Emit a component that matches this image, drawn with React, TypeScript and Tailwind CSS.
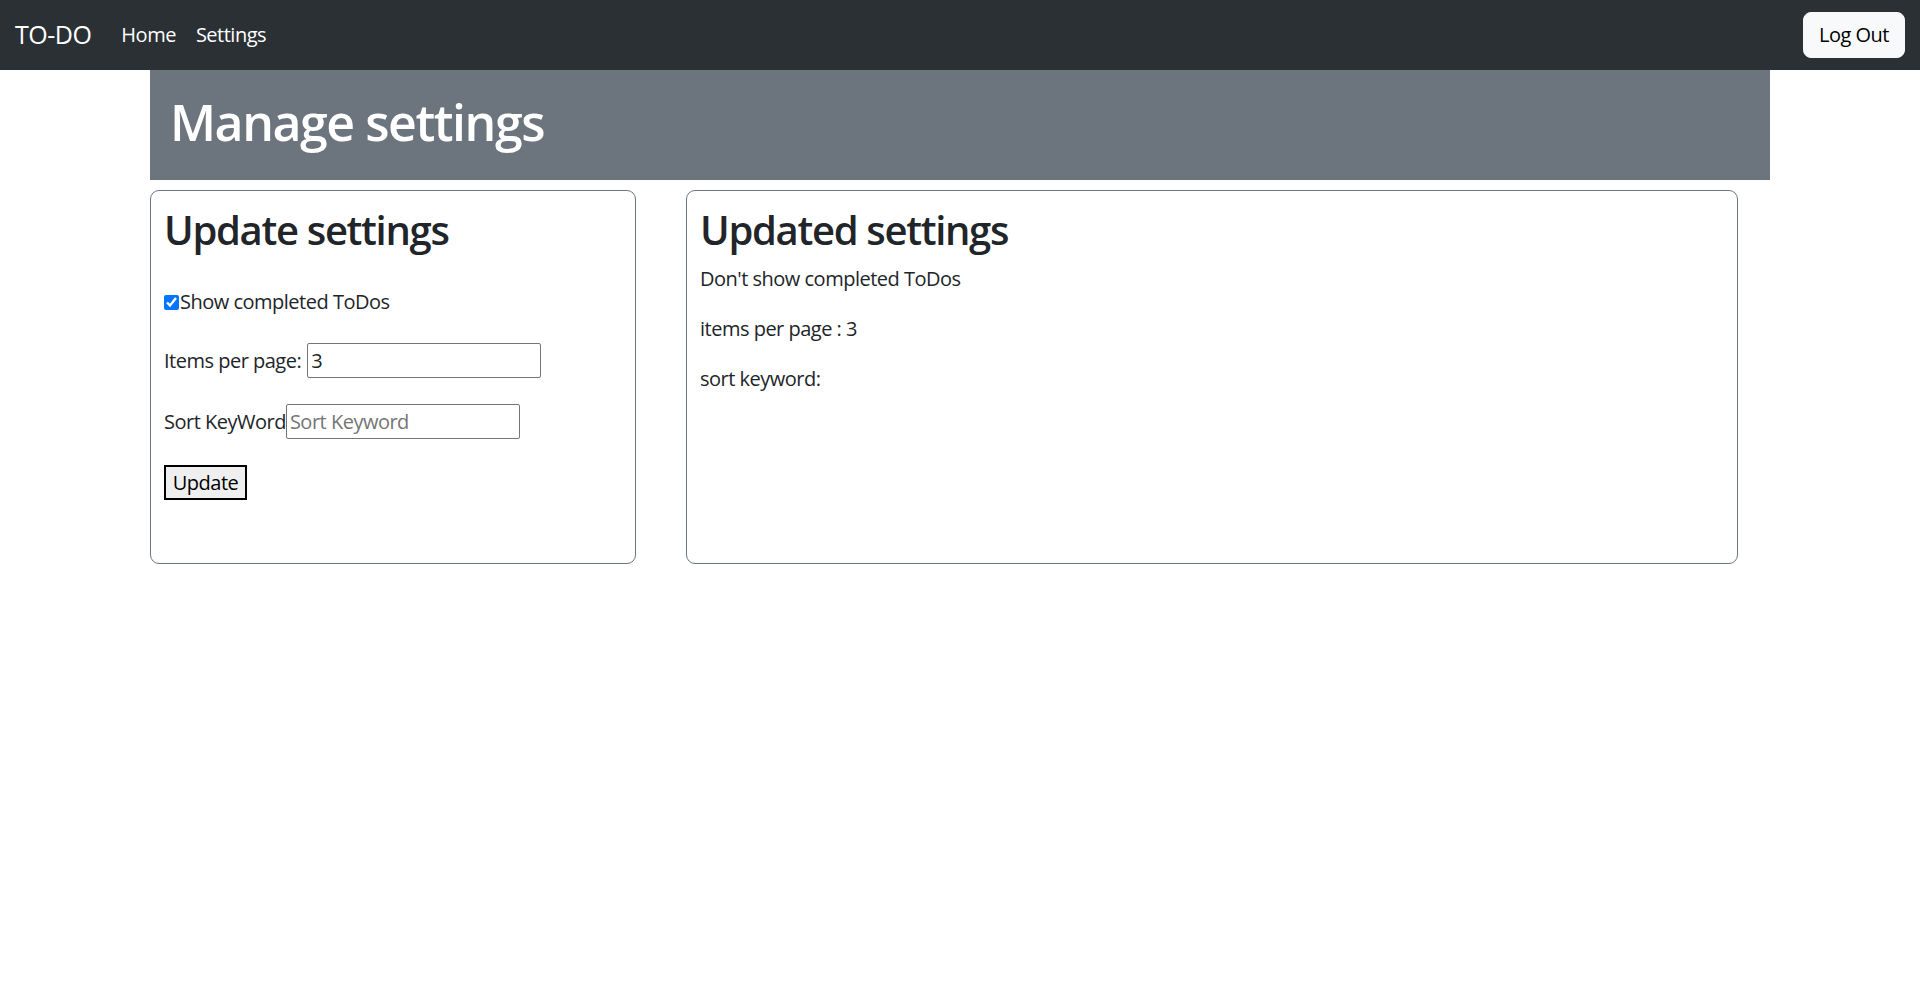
import React from "react";

function NavBar() {
  return (
    <nav className="flex h-[70px] items-center justify-between bg-[#2b3035] px-[15px]">
      <div className="flex items-center">
        <span className="mr-[20px] text-[25px] leading-[1.5] text-white">TO-DO</span>
        <a href="#" className="px-[10px] text-white">Home</a>
        <a href="#" className="px-[10px] text-white">Settings</a>
      </div>
      <button className="h-[46px] rounded-[8px] border border-[#f8f9fa] bg-[#f8f9fa] px-[15px] text-[20px] tracking-[-0.025em] text-black">
        Log Out
      </button>
    </nav>
  );
}

function UpdateCard() {
  return (
    <section className="h-[374px] w-[486px] rounded-[9px] border border-[#6c757d] px-[13px] pt-[15px]">
      <h2 className="mb-[10px] text-[40px] font-semibold leading-[1.2] tracking-[-0.033em]">Update settings</h2>
      <form className="mt-[33px] flex flex-col gap-[26px]" onSubmit={(e) => e.preventDefault()}>
        <label className="flex h-[30px] items-center">
          <input type="checkbox" defaultChecked className="m-0 h-[15px] w-[15px] accent-[#0075ff]" />
          <span className="ml-[1px]">Show completed ToDos</span>
        </label>
        <div className="flex h-[35px] items-center">
          <span className="mr-[6px]">Items per page:</span>
          <input
            type="text"
            defaultValue="3"
            className="h-[35px] w-[234px] rounded-[2px] border border-[#767676] px-[3px] text-[20px]"
          />
        </div>
        <div className="flex h-[35px] items-center">
          <span>Sort KeyWord</span>
          <input
            type="text"
            placeholder="Sort Keyword"
            className="h-[35px] w-[234px] rounded-[2px] border border-[#767676] px-[3px] text-[20px] placeholder:text-[#757575]"
          />
        </div>
        <div>
          <button type="submit" className="h-[35px] w-[83px] border-2 border-black bg-[#efefef] text-[20px] text-black">
            Update
          </button>
        </div>
      </form>
    </section>
  );
}

function SummaryCard() {
  return (
    <section className="ml-[50px] h-[374px] w-[1052px] rounded-[9px] border border-[#6c757d] px-[13px] pt-[15px]">
      <h2 className="mb-[10px] text-[40px] font-semibold leading-[1.2] tracking-[-0.033em]">Updated settings</h2>
      <p className="mb-[20px]">Don't show completed ToDos</p>
      <p className="mb-[20px]">items per page : 3</p>
      <p className="mb-[20px]">sort keyword:</p>
    </section>
  );
}

export default function App() {
  return (
    <div className="min-h-screen bg-white font-['Segoe_UI','Open_Sans',sans-serif] text-[20px] leading-[1.5] tracking-[-0.025em] text-[#212529]">
      <NavBar />
      <main className="mx-auto w-[1620px]">
        <header className="bg-[#6c757d] px-[20px] pb-[18px] pt-[22px]">
          <h1 className="mb-[10px] text-[50px] font-semibold leading-[1.2] tracking-[-0.029em] text-white">Manage settings</h1>
        </header>
        <div className="mt-[10px] flex">
          <UpdateCard />
          <SummaryCard />
        </div>
      </main>
    </div>
  );
}
